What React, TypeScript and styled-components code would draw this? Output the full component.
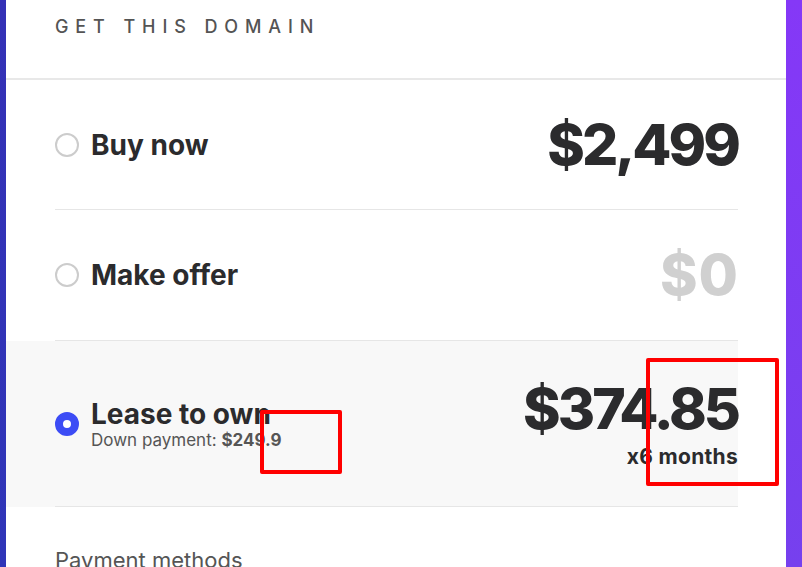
import React from "react";
import styled, { createGlobalStyle } from "styled-components";

const GlobalStyle = createGlobalStyle`
  html, body {
    margin: 0;
    padding: 0;
    background: #fff;
  }
  body {
    font-family: Inter, Lato, "Liberation Sans", sans-serif;
    color: #2b2b2d;
  }
`;

interface Option {
  id: string;
  label: string;
  price: string;
  muted?: boolean;
  selected?: boolean;
  height: number;
  downPayment?: string;
  term?: string;
}

const options: Option[] = [
  { id: "buy", label: "Buy now", price: "$2,499", height: 130 },
  { id: "offer", label: "Make offer", price: "$0", muted: true, height: 131 },
  {
    id: "lease",
    label: "Lease to own",
    price: "$374.85",
    selected: true,
    height: 166,
    downPayment: "$249.9",
    term: "x6 months",
  },
];

const Page = styled.div`
  position: relative;
  display: flex;
  width: 802px;
  height: 567px;
  overflow: hidden;
`;

const SideBar = styled.div<{ side: "left" | "right" }>`
  flex-shrink: 0;
  width: ${({ side }) => (side === "left" ? "6px" : "16px")};
  background: ${({ side }) =>
    side === "left"
      ? "linear-gradient(to bottom, #3431b6, #2f35b8)"
      : "linear-gradient(to bottom, #8538f7, #7640ee)"};
`;

const Card = styled.div`
  flex: 1;
  background: #fff;
`;

const Header = styled.div`
  height: 80px;
  box-sizing: border-box;
  display: flex;
  align-items: center;
  padding: 0 0 26px 49px;
  border-bottom: 2px solid #e8e8e8;
  font-size: 18px;
  font-weight: 500;
  letter-spacing: 6.9px;
  color: #545454;
  text-transform: uppercase;
`;

const List = styled.div`
  padding-right: 48px;
`;

const Row = styled.div<{ highlight?: boolean }>`
  padding-left: 49px;
  background: ${({ highlight }) => (highlight ? "#f8f8f8" : "transparent")};
`;

const RowInner = styled.div<{ h: number }>`
  height: ${({ h }) => h}px;
  box-sizing: border-box;
  display: flex;
  align-items: center;
  justify-content: space-between;
  border-bottom: 1px solid #e6e6e6;
`;

const Left = styled.div`
  display: flex;
  align-items: center;
  gap: 12px;
`;

const Radio = styled.span<{ checked?: boolean }>`
  width: 24px;
  height: 24px;
  box-sizing: border-box;
  border-radius: 50%;
  border: ${({ checked }) => (checked ? "8px solid #3c4cf5" : "2px solid #cccccc")};
  background: #fff;
  flex-shrink: 0;
`;

const LabelBlock = styled.div`
  display: flex;
  flex-direction: column;
`;

const Label = styled.div`
  font-size: 28px;
  font-weight: 700;
  line-height: 32px;
  color: #2b2b2d;
`;

const SubLabel = styled.div`
  font-size: 17px;
  color: #555;
  line-height: 20px;

  b {
    font-weight: 700;
  }
`;

const PriceBlock = styled.div`
  display: flex;
  flex-direction: column;
  align-items: flex-end;
`;

const Price = styled.div<{ muted?: boolean }>`
  font-size: 57px;
  font-weight: 800;
  line-height: 60px;
  letter-spacing: ${({ muted }) => (muted ? "1px" : "-3px")};
  margin-right: ${({ muted }) => (muted ? "-1px" : "0")};
  color: ${({ muted }) => (muted ? "#d0d0d0" : "#2b2b2d")};
`;

const Term = styled.div`
  margin-top: 6px;
  font-size: 21px;
  font-weight: 700;
  line-height: 24px;
  letter-spacing: 0.3px;
  color: #2b2b2d;
`;

const Footer = styled.div`
  padding: 40px 0 0 49px;
  font-size: 22px;
  color: #555;
`;

const Marker = styled.div`
  position: absolute;
  box-sizing: border-box;
  border: 4px solid #ff0000;
  border-radius: 2px;
  pointer-events: none;
`;

export default function App() {
  return (
    <Page>
      <GlobalStyle />
      <SideBar side="left" />
      <Card>
        <Header>Get this domain</Header>
        <List>
          {options.map((o) => (
            <Row key={o.id} highlight={o.selected}>
              <RowInner h={o.height}>
                <Left>
                  <Radio checked={o.selected} />
                  <LabelBlock>
                    <Label>{o.label}</Label>
                    {o.downPayment && (
                      <SubLabel>
                        Down payment: <b>{o.downPayment}</b>
                      </SubLabel>
                    )}
                  </LabelBlock>
                </Left>
                <PriceBlock>
                  <Price muted={o.muted}>{o.price}</Price>
                  {o.term && <Term>{o.term}</Term>}
                </PriceBlock>
              </RowInner>
            </Row>
          ))}
        </List>
        <Footer>Payment methods</Footer>
      </Card>
      <SideBar side="right" />
      <Marker style={{ left: 260, top: 410, width: 82, height: 64 }} />
      <Marker style={{ left: 646, top: 358, width: 133, height: 128 }} />
    </Page>
  );
}
